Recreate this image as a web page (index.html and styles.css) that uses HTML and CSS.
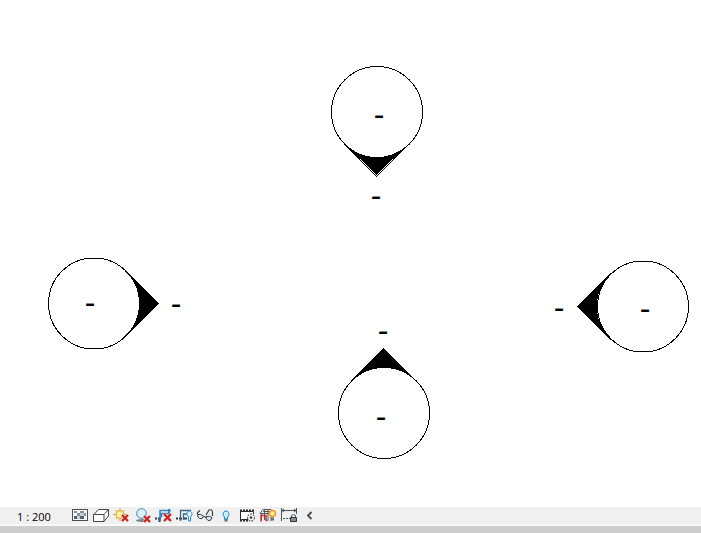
FILE: index.html
```html
<!DOCTYPE html>
<html lang="en">
<head>
<meta charset="utf-8">
<title>Floor plan view</title>
<link rel="stylesheet" href="styles.css">
</head>
<body>
<main class="canvas">
  <div class="marker north">
    <svg width="94" height="114" viewBox="0 0 94 114" shape-rendering="crispEdges" aria-hidden="true"><path d="M14 78.500L46.500 110L79 78.500A45.500 45.500 0 0 1 14 78.500Z" fill="#000"/><circle class="ring" cx="47" cy="47" r="45.500"/><path class="ring" d="M14 79L46.500 111.500L79 79"/></svg>
    <span class="dash inner">-</span><span class="dash outer">-</span>
  </div>
  <div class="marker west">
    <svg width="114" height="94" viewBox="0 0 114 94" shape-rendering="crispEdges" aria-hidden="true"><path d="M78.500 14L111 46.500L78.500 79A45.500 45.500 0 0 0 78.500 14Z" fill="#000"/><circle class="ring" cx="47" cy="46.500" r="45.500"/><path class="ring" d="M78 13.500L111 46.500L78 79.500"/></svg>
    <span class="dash inner">-</span><span class="dash outer">-</span>
  </div>
  <div class="marker east">
    <svg width="114" height="94" viewBox="0 0 114 94" shape-rendering="crispEdges" aria-hidden="true"><path d="M34.500 14L2 46.500L34.500 79A45.500 45.500 0 0 1 34.500 14Z" fill="#000"/><circle class="ring" cx="67" cy="46.500" r="45.500"/><path class="ring" d="M35 13.500L2 46.500L35 79.500"/></svg>
    <span class="dash inner">-</span><span class="dash outer">-</span>
  </div>
  <div class="marker south">
    <svg width="94" height="114" viewBox="0 0 94 114" shape-rendering="crispEdges" aria-hidden="true"><path d="M14 34L46 2L79 34A45.500 45.500 0 0 0 14 34Z" fill="#000"/><circle class="ring" cx="47" cy="66" r="45.500"/><path class="ring" d="M14 34.500L46.500 2L79.500 34.500"/></svg>
    <span class="dash inner">-</span><span class="dash outer">-</span>
  </div>
</main>
<footer class="view-bar">
  <button class="scale" type="button">1 : 200</button>
  <div class="tools">
    <button type="button" aria-label="Detail level"><svg viewBox="0 0 16 16"><g shape-rendering="crispEdges"><path d="M0 2h16v12H0z" fill="#46525c"/><path d="M1 3h14v10H1z" fill="#f5f7f8"/><path d="M2 4h3v2H2zM8 4h4v2H8zM5 6h3v3H5zM12 6h2v3h-2z" fill="#82909a"/><path d="M2 9h3v3H2zM8 9h4v3H8z" fill="#53616b"/><path d="M5 9h3v3H5zM8 6h4v3H8z" fill="#c5cfd5"/></g></svg></button>
    <button type="button" aria-label="Visual style"><svg viewBox="0 0 16 16"><path d="M1 7.500L5.500 2.500H15.500V9L11 14.500H.5v-7H11v7M11 7.500L15.500 2.500" fill="#fff" stroke="#3c464f"/></svg></button>
    <button type="button" aria-label="Sun path off"><svg viewBox="0 0 16 16"><path d="M6 1v13M-1 7.500h14M1.500 3l9 9M1.500 12l9-9" stroke="#df9c22"/><circle cx="6" cy="7.500" r="4" fill="#fff3a5" stroke="#e0a12d"/><path class="cross-edge" d="M8 8l6 6M14 8l-6 6"/><path class="cross" d="M8 8l6 6M14 8l-6 6"/></svg></button>
    <button type="button" aria-label="Shadows off"><svg viewBox="0 0 16 16"><ellipse cx="7" cy="13.500" rx="6" ry="1.500" fill="#77838b"/><circle cx="6.500" cy="6.500" r="4.800" fill="#d8f0fc" stroke="#4285b0"/><path class="cross-edge" d="M9 9l6 6M15 9l-6 6"/><path class="cross" d="M9 9l6 6M15 9l-6 6"/></svg></button>
    <button type="button" aria-label="Crop view off"><svg viewBox="0 0 16 16"><path d="M-1 11.500h2m1 0h3M3.500 12v3" stroke="#303b44" stroke-width="2"/><path d="M4 14V3.500H15M5.500 10.500v-4H14" fill="none" stroke="#3187b9" stroke-width="1.500"/><path d="M13 2v12" stroke="#3187b9" stroke-width="2"/><path class="cross-edge" d="M8 7l7 7M15 7l-7 7"/><path class="cross" d="M8 7l7 7M15 7l-7 7"/></svg></button>
    <button type="button" aria-label="Hide crop region"><svg viewBox="0 0 16 16"><path d="M-1 11.500h2m1 0h3M6 11.500h4" stroke="#303b44" stroke-width="2"/><path d="M3.500 14V3.500H14M6.500 13v-6H10" fill="none" stroke="#40677e" stroke-width="1.300"/><path d="M11.500 10c-3-3-1-6 1-6s4 3 1 6v4h-2z" fill="#d9f3ff" stroke="#328dcc"/></svg></button>
    <button type="button" aria-label="Temporary hide or isolate"><svg viewBox="0 0 16 16"><path d="M.5 7V5.500L3 3.500M9 8l3-5q3-1 3.500 2v4M6.500 9.500l3 1" fill="none" stroke="#34414c" stroke-width="1.200"/><path d="M.5 7.500q3-1 6 1.500-1 4-4 2.500-2-1-2-4z" fill="#dce5eb" stroke="#34414c"/><path d="M9 9.500q4-1 6 1-1 4-4 3-2-1-2-4z" fill="#dce5eb" stroke="#34414c"/></svg></button>
    <button type="button" aria-label="Reveal hidden elements"><svg viewBox="0 0 16 16"><path d="M6.500 10c-2.500-2-1.500-6 1.500-6s4 4 1.500 6v2h-3z" fill="#c8edff" stroke="#1684d0"/><path d="M6.500 12h3v2.500h-3z" fill="#547084"/></svg></button>
    <button type="button" aria-label="Temporary view properties"><svg viewBox="0 0 16 16"><path d="M1.500 4.500h13v8h-13z" fill="#fff" stroke="#252b30"/><path d="M1 3.500h14M1 13.500h8" stroke="#252b30" stroke-width="2" stroke-dasharray="2 1"/><path d="M9 7h6v7H9z" fill="#f4f4f4"/><circle cx="12" cy="10.500" r="3.500" stroke="#252b30" stroke-dasharray="2 1"/><circle cx="12" cy="10.500" r="1.200" fill="#252b30"/></svg></button>
    <button type="button" aria-label="Analytical model"><svg viewBox="0 0 16 16"><path d="M0 6.500l3-4h8l3 4M1.500 7v7M4.500 3v10M8 3v11M11 7v7M0 6.500h13M3 4.500h9" fill="none" stroke="#505860"/><path d="M1 14.500V8.500h5v5h1" fill="none" stroke="#cf3333" stroke-width="1.500"/><circle cx="12.500" cy="6.500" r="3" fill="#fff09b" stroke="#f29c25" stroke-width="1.500"/><path d="M11 10.500h3v3h-3z" fill="#6b7378"/></svg></button>
    <button type="button" aria-label="Reveal constraints"><svg viewBox="0 0 16 16"><path d="M.5 1v13M15.500 1v6M1 3.500h14M3 2L1 3.500 3 5M13 2l2 1.500L13 5" fill="none" stroke="#49535b"/><path d="M2 11.500h7" stroke="#49535b" stroke-dasharray="2 1"/><path d="M10.500 10V8.500q2-2 4 0V10" fill="none" stroke="#49535b"/><path d="M9.500 10.500h6v4h-6z" fill="#858b90" stroke="#30373d"/></svg></button>
    <button type="button" aria-label="Scroll left"><svg viewBox="0 0 16 16"><path d="M9.500 5L6 8.500 9.500 12" fill="none" stroke="#454545" stroke-width="1.800"/></svg></button>
  </div>
</footer>
</body>
</html>
```
FILE: styles.css
```css
* {
  box-sizing: border-box;
}

body {
  margin: 0;
  min-height: 100vh;
  display: flex;
  flex-direction: column;
  background: #fff;
  font-family: "Open Sans", "Noto Sans", sans-serif;
}

.canvas {
  position: relative;
  flex: 1;
  overflow: hidden;
}

.marker {
  position: absolute;
}

.marker svg {
  display: block;
}

.north { left: 330px; top: 65px; }
.west { left: 47px; top: 257px; }
.east { left: 576px; top: 260px; }
.south { left: 337px; top: 347px; }

.ring {
  fill: none;
  stroke: #000;
  stroke-width: 1px;
}

.dash {
  position: absolute;
  width: 12px;
  text-align: center;
  font: 32px/24px "Liberation Sans", sans-serif;
}

.north .inner { left: 43px; top: 37px; }
.north .outer { left: 40px; top: 118px; }
.west .inner { left: 37px; top: 33px; }
.west .outer { left: 123px; top: 34px; }
.east .inner { left: 63px; top: 36px; }
.east .outer { left: -23px; top: 35px; }
.south .inner { left: 38px; top: 57px; }
.south .outer { left: 40px; top: -29px; }

.view-bar {
  display: flex;
  align-items: center;
  padding-left: 17px;
  background: #f0f0f0;
  border-bottom: 7px solid #cdcdcd;
  box-shadow: inset 0 -2px #fafafa;
}

.view-bar button {
  display: flex;
  align-items: center;
  justify-content: center;
  padding: 0;
  border: 0;
  background: none;
  color: #000;
}

.view-bar .scale {
  width: 53px;
  justify-content: flex-start;
  font: 11px/18px "Open Sans", "Noto Sans", sans-serif;
}

.tools {
  display: grid;
  grid-template-columns: repeat(12, 1fr);
  width: 250px;
  padding-bottom: 3px;
}

.tools svg {
  width: 16px;
  height: 16px;
  flex: none;
  fill: none;
  overflow: visible;
}

.cross-edge {
  stroke: #f7d0cd;
  stroke-width: 3px;
}

.cross {
  stroke: #cb1f1f;
  stroke-width: 2px;
}
```
